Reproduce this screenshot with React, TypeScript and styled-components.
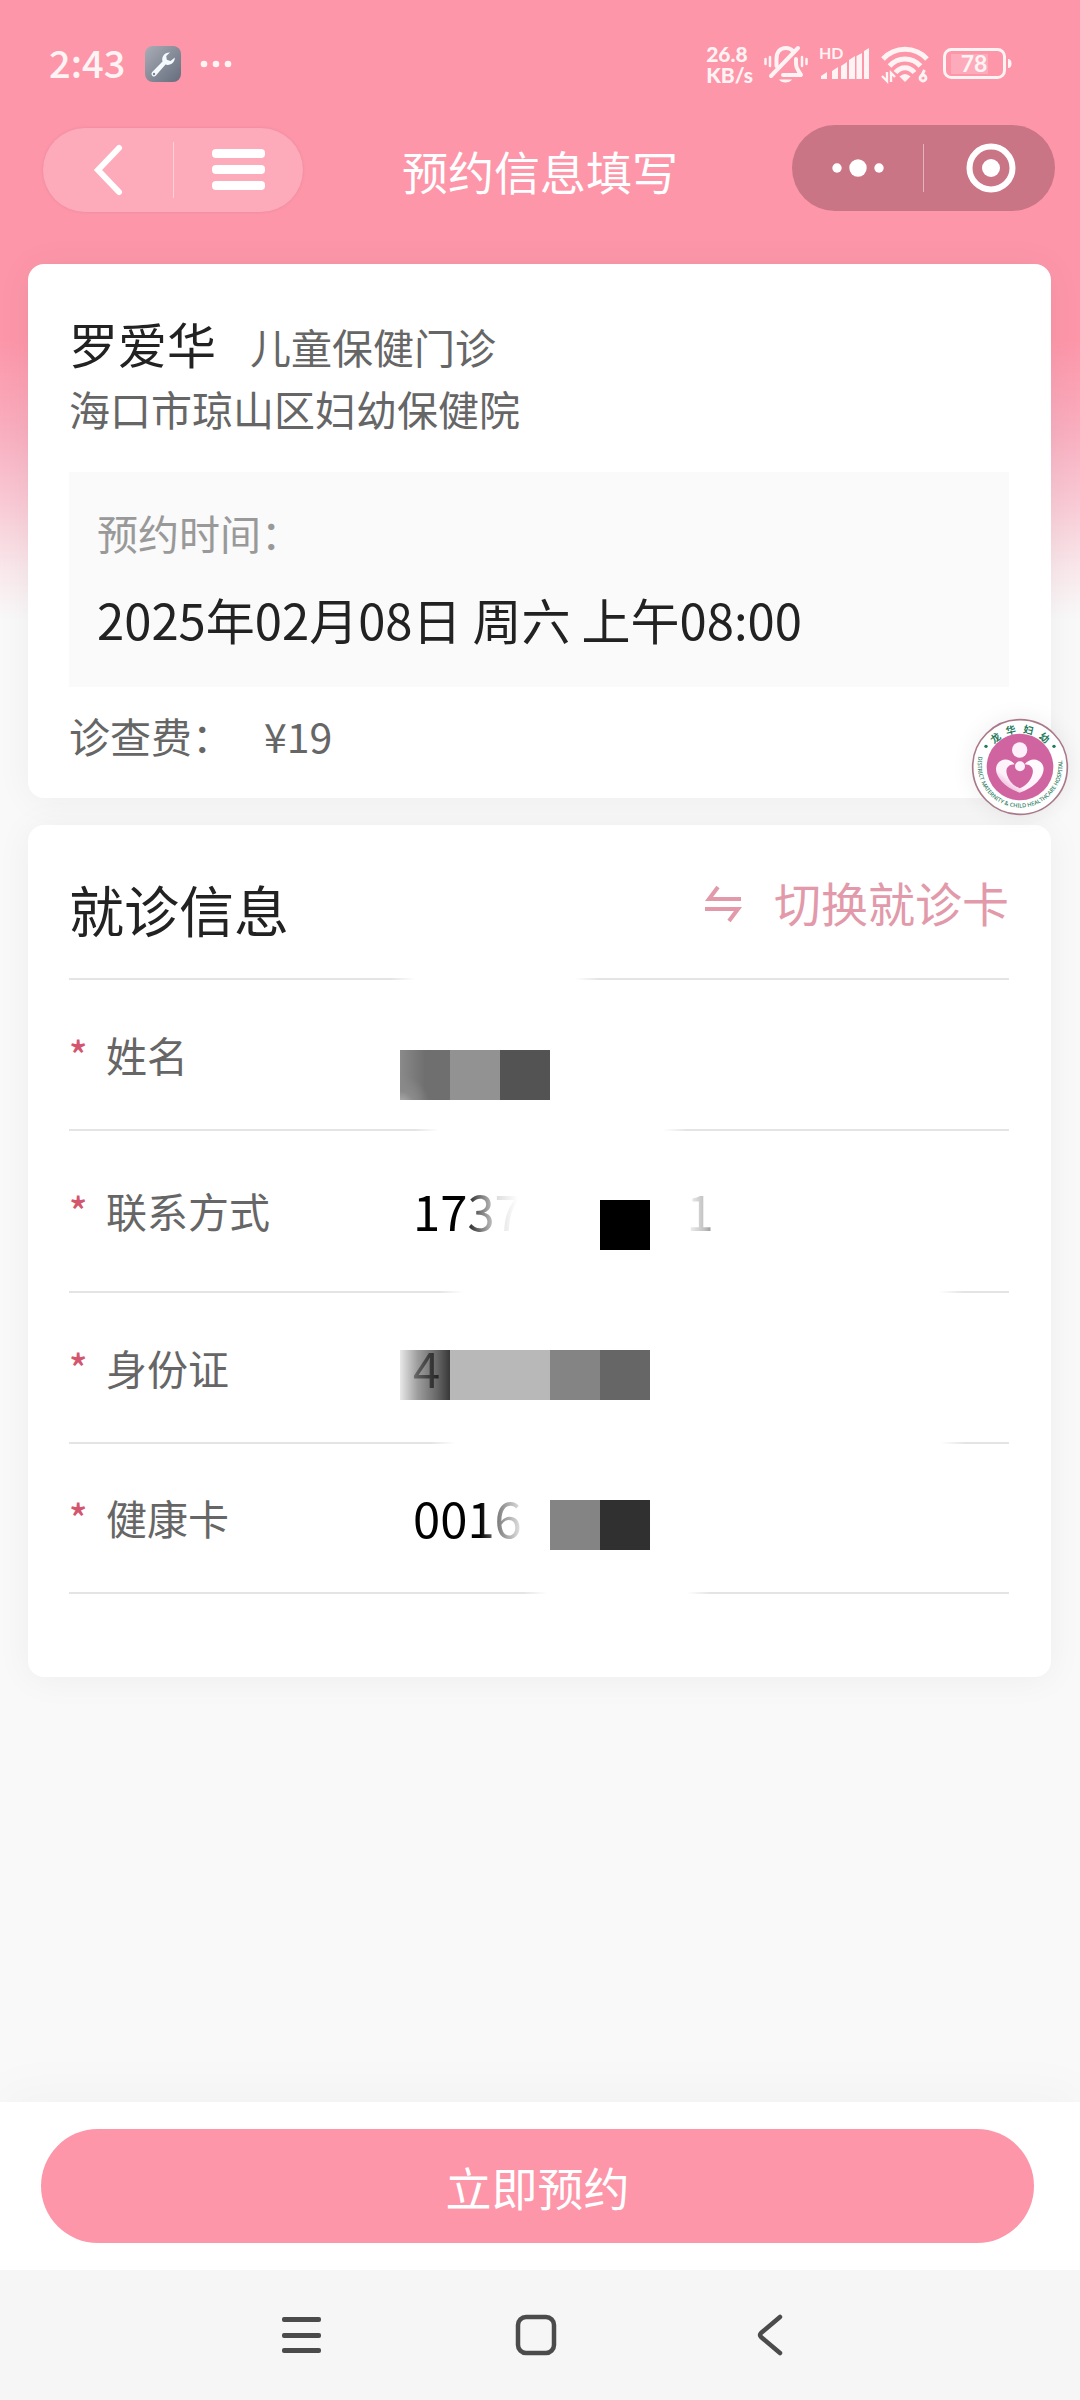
import React from "react";
import styled, { createGlobalStyle } from "styled-components";

const GlobalStyle = createGlobalStyle`
  *, *::before, *::after { box-sizing: border-box; }
  body {
    margin: 0;
    background: #f9f9f9;
    font-family: "Noto Sans CJK SC", "Noto Sans", sans-serif;
    font-size: 41px;
    line-height: 62px;
    color: #666;
  }
  button, input { font: inherit; color: inherit; }
  button { border: 0; padding: 0; background: none; cursor: pointer; }
  h1, h2, p, dl, dd { margin: 0; font-weight: 400; }
  svg { overflow: visible; flex: none; }
`;

const Page = styled.div`
  position: relative;
  display: flex;
  flex-direction: column;
  min-height: 100vh;
  background: linear-gradient(
    #fd96a9 0, #fd96a9 340px, #f9aebf 430px, #f9c8d4 500px, #f9e6ea 565px, #f9f9f9 620px
  );
`;

const StatusBar = styled.div`
  display: flex;
  align-items: center;
  justify-content: space-between;
  height: 125px;
  padding: 3px 68px 0 49px;
  color: #fff3f4;
`;

const StatusGroup = styled.div<{ $gap: number }>`
  display: flex;
  align-items: center;
  gap: ${(p) => p.$gap}px;
`;

const Clock = styled.span`
  font-size: 38px;
  font-weight: 500;
  line-height: 58px;
  padding-bottom: 4px;
`;

const Speed = styled.span`
  display: flex;
  flex-direction: column;
  font-family: Lato, "Noto Sans", sans-serif;
  font-size: 21px;
  font-weight: 900;
  line-height: 21px;
`;

const Header = styled.header`
  display: grid;
  grid-template-columns: 1fr auto 1fr;
  align-items: center;
  height: 90px;
  padding: 0 25px;
`;

const Title = styled.h1`
  font-size: 46px;
  color: #fff;
`;

const Pill = styled.div`
  display: flex;
  align-items: center;
  width: 260px;
  height: 84px;
  margin-left: 18px;
  border-radius: 42px;
  background: rgba(255, 255, 255, 0.2);
  box-shadow: 0 0 3px rgba(150, 80, 95, 0.2);
`;

const Capsule = styled(Pill)`
  align-self: start;
  justify-self: end;
  width: 263px;
  height: 86px;
  margin-left: 0;
  border-radius: 43px;
  background: #c97585;
  box-shadow: none;
`;

const PillButton = styled.button`
  display: flex;
  flex: 1;
  align-items: center;
  justify-content: center;
  height: 100%;
`;

const PillRule = styled.span<{ $height: number }>`
  width: 1px;
  height: ${(p) => p.$height}px;
  background: rgba(255, 255, 255, 0.45);
`;

const Main = styled.main`
  display: flex;
  flex: 1;
  flex-direction: column;
  gap: 27px;
  padding: 49px 29px 0 28px;
`;

const Card = styled.section`
  border-radius: 16px;
  background: #fff;
  padding: 0 42px 0 41px;
  box-shadow: 0 2px 36px rgba(0, 0, 0, 0.05);
`;

const DoctorCard = styled(Card)`
  padding-top: 48px;
  padding-bottom: 32px;
`;

const DoctorLine = styled.div`
  display: flex;
  align-items: baseline;
  gap: 34px;
`;

const DoctorName = styled.h2`
  font-size: 49px;
  color: #222;
`;

const TimeBox = styled.dl`
  display: flex;
  flex-direction: column;
  gap: 25px;
  margin: 33px 0 17px;
  padding: 29px 28px 37px;
  background: #fafafa;
`;

const TimeLabel = styled.dt`
  color: #999;
`;

const TimeValue = styled.dd`
  font-size: 49px;
  color: #222;
`;

const Fee = styled.p`
  display: flex;
  gap: 31px;
`;

const PatientCard = styled(Card)`
  padding-bottom: 83px;
`;

const CardHead = styled.div`
  display: flex;
  align-items: center;
  justify-content: space-between;
  height: 153px;
`;

const CardTitle = styled.h2`
  padding-top: 12px;
  font-size: 55px;
  color: #222;
`;

const SwitchButton = styled.button`
  display: flex;
  align-items: center;
  gap: 32px;
  font-size: 47px;
  color: #e29aaa;
`;

const Rule = styled.div<{ $from: number; $to: number }>`
  height: 2px;
  background: linear-gradient(
    90deg,
    #e4e4e4 ${(p) => p.$from - 24}px,
    transparent ${(p) => p.$from}px,
    transparent ${(p) => p.$to}px,
    #e4e4e4 ${(p) => p.$to + 24}px
  );
`;

const Row = styled.div<{ $height: number }>`
  position: relative;
  display: grid;
  grid-template-columns: 37px 307px 1fr;
  align-items: center;
  height: ${(p) => p.$height}px;
  padding-bottom: 2px;
`;

const Star = styled.span`
  font-size: 38px;
  font-weight: 500;
  color: #d4566e;
`;

const ValueInput = styled.input`
  width: 100%;
  height: 62px;
  border: 0;
  padding: 0;
  outline: 0;
  background: none;
  font-size: 49px;
  color: #000;
`;

const Mosaic = styled.div<{ $top: number }>`
  position: absolute;
  left: 331px;
  top: ${(p) => p.$top}px;
  display: grid;
  grid-template-columns: repeat(7, 50px);
  height: 50px;
  pointer-events: none;
`;

const Tile = styled.span<{ $fill: string }>`
  background: ${(p) => p.$fill};
`;

const Veil = styled.div<{ $fill: string }>`
  position: absolute;
  left: 331px;
  top: 20px;
  bottom: 20px;
  width: 350px;
  background: ${(p) => p.$fill};
  pointer-events: none;
`;

const Footer = styled.footer`
  padding: 27px 46px 27px 41px;
  background: #fff;
  box-shadow: 0 -10px 50px rgba(0, 0, 0, 0.03);
`;

const SubmitButton = styled.button`
  width: 100%;
  height: 114px;
  border-radius: 57px;
  background: #fd96a9;
  font-size: 46px;
  color: #fff;
`;

const SystemNav = styled.nav`
  display: flex;
  align-items: center;
  justify-content: center;
  height: 130px;
  padding-right: 8px;
  background: #f6f6f6;
`;

const NavButton = styled.button`
  display: flex;
  align-items: center;
  justify-content: center;
  width: 234px;
  height: 100%;
`;

const FloatingBadge = styled.button`
  position: absolute;
  top: 719px;
  right: 12px;
  width: 96px;
  height: 96px;
  border-radius: 50%;
  background: #fff;
  box-shadow: 0 0 24px rgba(0, 0, 0, 0.07);
  svg { display: block; }
`;

type Field = {
  id: string;
  label: string;
  value: string;
  height: number;
  rule: [number, number];
  top: number;
  tiles: string[];
  veil?: string;
};

const NONE = "transparent";

const fields: Field[] = [
  {
    id: "name",
    label: "姓名",
    value: "",
    height: 149,
    rule: [370, 594],
    top: 70,
    tiles: [
      "radial-gradient(circle at 0 110%, #b4b4b4 0, #8a8a8a 14px, transparent 30px), linear-gradient(90deg, #8a8a8a, #6f6f6f 50%)",
      "#929292",
      "#535353",
    ],
  },
  {
    id: "phone",
    label: "联系方式",
    value: "1737" + "\u00a0".repeat(15) + "1",
    height: 160,
    rule: [394, 870],
    top: 69,
    tiles: [NONE, NONE, NONE, NONE, "#000"],
    veil: "linear-gradient(90deg, rgba(255,255,255,0) 62px, rgba(255,255,255,.5) 82px, rgba(255,255,255,.88) 98px, #fff 118px, #fff 284px, rgba(255,255,255,.75) 305px, rgba(255,255,255,.45) 318px)",
  },
  {
    id: "idcard",
    label: "身份证",
    value: "4",
    height: 149,
    rule: [386, 872],
    top: 57,
    tiles: [
      "linear-gradient(90deg, rgba(225,225,225,.75), rgba(125,125,125,.75) 35%, rgba(50,50,50,.75) 75%, #383838)",
      "#b8b8b8",
      "#b8b8b8",
      "#848484",
      "#666",
    ],
  },
  {
    id: "health",
    label: "健康卡",
    value: "0016",
    height: 148,
    rule: [478, 618],
    top: 56,
    tiles: [NONE, NONE, NONE, "#848484", "#303030"],
    veil: "linear-gradient(90deg, rgba(255,255,255,0) 80px, rgba(255,255,255,.5) 98px, rgba(255,255,255,.88) 120px, #fff 140px, transparent 141px)",
  },
];

const WrenchTile = () => (
  <svg width="36" height="36" viewBox="0 0 36 36" aria-hidden="true">
    <defs>
      <linearGradient id="steel" x1="0" y1="0" x2="1" y2="1">
        <stop offset="0" stopColor="#a9adb6" />
        <stop offset="1" stopColor="#646c7c" />
      </linearGradient>
    </defs>
    <rect width="36" height="36" rx="8" fill="url(#steel)" />
    <path
      d="M25 6.500A7 7 0 0 0 17.500 15.500L7 26.200A2.600 2.600 0 0 0 10.700 29.800L20.500 18.500A7 7 0 0 0 29.800 11.500L25.500 15L21.800 13.800L21.200 10Z"
      fill="#f4fbff"
    />
    <circle cx="9" cy="28" r="1.200" fill="#7b8391" />
  </svg>
);

const StatusDots = () => (
  <svg width="32" height="8" viewBox="0 0 32 8" fill="currentColor" aria-hidden="true">
    <circle cx="3" cy="4" r="3.300" />
    <circle cx="15" cy="4" r="3.300" />
    <circle cx="27" cy="4" r="3.300" />
  </svg>
);

const BellOff = () => (
  <svg width="44" height="38" viewBox="0 0 44 38" fill="none" stroke="currentColor" strokeWidth="4" strokeLinecap="round" aria-hidden="true">
    <path d="M12.500 21V14C12.500 7 16 3 22 3C25 3 27 4 29 6" />
    <path d="M32 14V19C32 24 35 26 37 30H19" strokeLinejoin="round" />
    <path d="M34 3L7 31" />
    <path d="M15 34.500H28C26 38.500 17 38.500 15 34.500Z" fill="currentColor" stroke="none" />
    <path d="M6 12V21M1.500 14V19M38 12V21M42.500 14V19" strokeWidth="2.500" />
  </svg>
);

const Signal = () => (
  <svg width="51" height="34" viewBox="0 0 51 34" fill="currentColor" aria-hidden="true">
    <text x="0" y="12" fontSize="16" fontWeight="700" fontFamily="Lato">HD</text>
    <path d="M2 32V29L8 25V32ZM13 24L19 20V32H13ZM22 19L28 15V32H22ZM30 13L36 9V32H30ZM37.500 9L43 6V32H37.500ZM45 4L50 1V32H45Z" />
  </svg>
);

const Wifi = () => (
  <svg width="48" height="38" viewBox="0 0 48 38" fill="none" stroke="currentColor" strokeWidth="5" aria-hidden="true">
    <path d="M2 14C14 1 34 1 46 14" />
    <path d="M8.500 21C17 11.500 31 11.500 39.500 21" />
    <path d="M14.500 27.500C20 21 28 21 33.500 27.500" />
    <path d="M18.500 31.500Q24 26.500 29.500 31.500L24 37Z" fill="currentColor" stroke="none" />
    <path d="M6 27V36L1 31M10 37V28L14 32" strokeWidth="2.400" />
    <circle cx="42" cy="33" r="3" strokeWidth="2.800" />
    <path d="M40 32L43.500 25" strokeWidth="2.800" />
  </svg>
);

const Battery = () => (
  <svg width="72" height="32" viewBox="-3 0 72 32" aria-hidden="true">
    <rect x="1.500" y="1.500" width="60" height="28" rx="7" fill="none" stroke="currentColor" strokeWidth="3" />
    <path d="M8 6H45V26H8Z" fill="#fff" opacity=".2" />
    <path d="M65 11V20Q68.500 20 68.500 15.500T65 11Z" fill="currentColor" />
    <text x="31" y="24" fontSize="23" fontWeight="700" fontFamily="Lato" textAnchor="middle" fill="currentColor">78</text>
  </svg>
);

const Chevron = () => (
  <svg width="28" height="50" viewBox="0 0 28 50" fill="none" stroke="#fff" strokeWidth="6" strokeLinecap="round" aria-hidden="true">
    <path d="M25 3L4 25L25 47" />
  </svg>
);

const Bars = () => (
  <svg width="53" height="42" viewBox="0 0 53 42" fill="#fff" aria-hidden="true">
    <rect y="0" width="53" height="9" rx="4" />
    <rect y="16" width="53" height="9" rx="4" />
    <rect y="32" width="53" height="9" rx="4" />
  </svg>
);

const MoreDots = () => (
  <svg width="52" height="18" viewBox="0 0 52 18" fill="#fff" aria-hidden="true">
    <circle cx="5" cy="9" r="4.700" />
    <circle cx="26" cy="9" r="8.700" />
    <circle cx="47" cy="9" r="4.700" />
  </svg>
);

const Target = () => (
  <svg width="50" height="50" viewBox="0 0 50 50" aria-hidden="true">
    <circle cx="26" cy="25" r="21.500" fill="none" stroke="#fff" strokeWidth="6" />
    <circle cx="26" cy="25" r="9" fill="#fff" />
  </svg>
);

const SwapIcon = () => (
  <svg width="37" height="34" viewBox="0 0 37 34" fill="none" stroke="currentColor" strokeWidth="4" aria-hidden="true">
    <path d="M36 14H4L13 2" />
    <path d="M0 24H33L24 36" />
  </svg>
);

const HospitalLogo = () => (
  <svg width="96" height="96" viewBox="0 0 288 288" role="img" aria-label="龙华妇幼">
    <defs>
      <path id="arcBottom" d="M20 112A127 127 0 1 0 270 122" />
      <linearGradient id="heart" x1="0" y1="1" x2="1" y2="0">
        <stop offset="0" stopColor="#dc7fb4" />
        <stop offset=".35" stopColor="#fdf0fa" />
        <stop offset="1" stopColor="#fff" />
      </linearGradient>
    </defs>
    <circle cx="144" cy="144" r="142" fill="#fff" stroke="#a9798a" strokeWidth="5" />
    <circle cx="144" cy="144" r="100" fill="#cf64a0" />
    <g fill="#1f7a5c" fontWeight="700">
      {[
        ["龙", -40],
        ["华", -14],
        ["妇", 13],
        ["幼", 40],
      ].map(([char, angle]) => (
        <text key={char} x="144" y="41" fontSize="30" textAnchor="middle" transform={`rotate(${angle} 144 144)`}>
          {char}
        </text>
      ))}
    </g>
    <circle cx="42" cy="82" r="5" fill="#1f7a5c" />
    <circle cx="246" cy="82" r="5" fill="#1f7a5c" />
    <text fontSize="17" fontWeight="500" fill="#1f7a5c" fontFamily="Noto Sans">
      <textPath href="#arcBottom">DISTRICT MATERNITY &amp; CHILD HEALTHCARE HOSPITAL</textPath>
    </text>
    <circle cx="143" cy="93" r="23" fill="#fdf0fa" />
    <path
      d="M143 221C98 206 66 170 73 143C80 117 112 114 128 136C108 136 98 150 106 170C114 192 130 202 143 208C158 202 172 190 180 170C188 150 178 136 158 136C174 114 206 117 214 143C220 170 188 206 143 221Z"
      fill="url(#heart)"
    />
    <circle cx="144" cy="142" r="15" fill="#fdf0fa" />
  </svg>
);

const NavMenu = () => (
  <svg width="40" height="38" viewBox="0 0 40 38" fill="#4b4b4b" aria-hidden="true">
    <rect y="1" width="39" height="5" rx="2" />
    <rect y="17" width="39" height="5" rx="2" />
    <rect y="32" width="39" height="5" rx="2" />
  </svg>
);

const NavHome = () => (
  <svg width="42" height="42" viewBox="0 0 42 42" fill="none" stroke="#4b4b4b" strokeWidth="4.500" aria-hidden="true">
    <rect x="3" y="3" width="36" height="36" rx="8" />
  </svg>
);

const NavBack = () => (
  <svg width="28" height="42" viewBox="0 0 28 42" fill="none" stroke="#4b4b4b" strokeWidth="4.500" strokeLinecap="round" strokeLinejoin="round" aria-hidden="true">
    <path d="M24 3L5 19Q3 21 5 23L24 39" />
  </svg>
);

export default function App() {
  return (
    <Page>
      <GlobalStyle />
      <StatusBar>
        <StatusGroup $gap={20}>
          <Clock>2:43</Clock>
          <WrenchTile />
          <StatusDots />
        </StatusGroup>
        <StatusGroup $gap={11}>
          <Speed>
            <span>26.8</span>
            <span>KB/s</span>
          </Speed>
          <BellOff />
          <Signal />
          <Wifi />
          <Battery />
        </StatusGroup>
      </StatusBar>

      <Header>
        <Pill>
          <PillButton type="button" aria-label="返回">
            <Chevron />
          </PillButton>
          <PillRule $height={56} />
          <PillButton type="button" aria-label="菜单">
            <Bars />
          </PillButton>
        </Pill>
        <Title>预约信息填写</Title>
        <Capsule>
          <PillButton type="button" aria-label="更多">
            <MoreDots />
          </PillButton>
          <PillRule $height={48} />
          <PillButton type="button" aria-label="关闭">
            <Target />
          </PillButton>
        </Capsule>
      </Header>

      <Main>
        <DoctorCard>
          <DoctorLine>
            <DoctorName>罗爱华</DoctorName>
            <span>儿童保健门诊</span>
          </DoctorLine>
          <p>海口市琼山区妇幼保健院</p>
          <TimeBox>
            <TimeLabel>预约时间：</TimeLabel>
            <TimeValue>2025年02月08日 周六 上午08:00</TimeValue>
          </TimeBox>
          <Fee>
            <span>诊查费：</span>
            <span>¥19</span>
          </Fee>
        </DoctorCard>

        <PatientCard>
          <CardHead>
            <CardTitle>就诊信息</CardTitle>
            <SwitchButton type="button">
              <SwapIcon />
              切换就诊卡
            </SwitchButton>
          </CardHead>
          <Rule $from={346} $to={506} />
          {fields.map((f) => (
            <React.Fragment key={f.id}>
              <Row $height={f.height}>
                <Star aria-hidden="true">*</Star>
                <label htmlFor={f.id}>{f.label}</label>
                <ValueInput id={f.id} value={f.value} readOnly />
                {f.veil && <Veil $fill={f.veil} />}
                <Mosaic $top={f.top} aria-hidden="true">
                  {f.tiles.map((fill, i) => (
                    <Tile key={i} $fill={fill} />
                  ))}
                </Mosaic>
              </Row>
              <Rule $from={f.rule[0]} $to={f.rule[1]} />
            </React.Fragment>
          ))}
        </PatientCard>
      </Main>

      <Footer>
        <SubmitButton type="button">立即预约</SubmitButton>
      </Footer>
      <SystemNav>
        <NavButton type="button" aria-label="最近任务">
          <NavMenu />
        </NavButton>
        <NavButton type="button" aria-label="主页">
          <NavHome />
        </NavButton>
        <NavButton type="button" aria-label="后退">
          <NavBack />
        </NavButton>
      </SystemNav>

      <FloatingBadge type="button">
        <HospitalLogo />
      </FloatingBadge>
    </Page>
  );
}
